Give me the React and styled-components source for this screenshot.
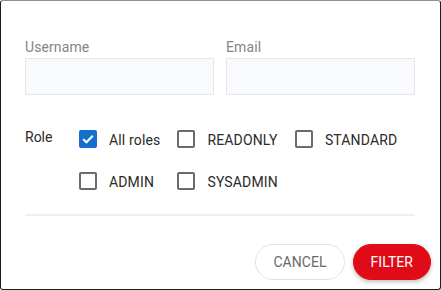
import React, { useState } from 'react'
import styled, { createGlobalStyle } from 'styled-components'

const GlobalStyle = createGlobalStyle`
  html, body {
    margin: 0;
    padding: 0;
    background: #fff;
  }
  body {
    font-family: Roboto, 'Liberation Sans', sans-serif;
    -webkit-font-smoothing: antialiased;
  }
  * {
    box-sizing: border-box;
  }
`

const Dialog = styled.div`
  width: 441px;
  height: 290px;
  border: 1px solid #1c1c1c;
  border-top-color: #8e8e8e;
  border-radius: 3px;
  background: #fff;
  display: flex;
  flex-direction: column;
`

const Body = styled.div`
  padding: 38px 25px 0 24px;
`

const Fields = styled.div`
  display: grid;
  grid-template-columns: minmax(0, 1fr) minmax(0, 1fr);
  column-gap: 12px;
`

const Field = styled.label`
  display: flex;
  flex-direction: column;
  min-width: 0;
`

const FieldLabel = styled.span`
  font-size: 14px;
  line-height: 16px;
  color: #858585;
  letter-spacing: 0.1px;
  margin-bottom: 3px;
`

const Input = styled.input`
  width: 100%;
  min-width: 0;
  height: 37px;
  background: #f9fafb;
  border: 1px solid #e4e6e9;
  border-radius: 1px;
  outline: none;
  font: inherit;
  font-size: 14px;
  padding: 0 10px;
`

const RoleRow = styled.div`
  display: flex;
  align-items: flex-start;
  margin-top: 35px;
`

const RoleLabel = styled.span`
  width: 54px;
  font-size: 14px;
  line-height: 14px;
  color: #2b2b2b;
`

const Options = styled.div`
  display: grid;
  grid-template-columns: repeat(3, auto);
  justify-content: start;
  column-gap: 17px;
  row-gap: 24px;
`

const Option = styled.label`
  display: flex;
  align-items: center;
  gap: 12px;
  height: 18px;
  cursor: pointer;
`

const Box = styled.span`
  width: 18px;
  height: 18px;
  border-radius: 2px;
  display: flex;
  align-items: center;
  justify-content: center;
  border: 2px solid ${({ $checked }) => ($checked ? '#1570cd' : '#6b6b6b')};
  background: ${({ $checked }) => ($checked ? '#1570cd' : '#fff')};
`

const OptionText = styled.span`
  font-size: 14px;
  line-height: 18px;
  letter-spacing: 0.15px;
  color: #2b2b2b;
  padding-top: 1px;
`

const Divider = styled.hr`
  border: 0;
  height: 2px;
  background: #efefef;
  margin: 24px 0 0;
`

const Footer = styled.div`
  display: flex;
  justify-content: flex-end;
  gap: 8px;
  padding: 28px 9px 0 0;
`

const Button = styled.button`
  height: 36px;
  padding: 0 17px;
  border-radius: 18px;
  font-family: Roboto, 'Liberation Sans', sans-serif;
  font-size: 14px;
  letter-spacing: 0.05px;
  text-transform: uppercase;
  cursor: pointer;
  border: 1px solid ${({ $primary }) => ($primary ? '#df0b18' : '#e3e3e3')};
  background: ${({ $primary }) => ($primary ? '#df0b18' : '#fff')};
  color: ${({ $primary }) => ($primary ? '#fff' : '#6a6a6a')};
  box-shadow: ${({ $primary }) =>
    $primary ? '0 2px 4px rgba(0, 0, 0, 0.25)' : 'none'};
`

const Check = () => (
  <svg width="14" height="14" viewBox="0 0 14 14">
    <polyline
      points="2.2,7.2 5.4,10.3 11.8,3.8"
      fill="none"
      stroke="#fff"
      strokeWidth="2"
    />
  </svg>
)

const roles = ['All roles', 'READONLY', 'STANDARD', 'ADMIN', 'SYSADMIN']

const App = () => {
  const [selected, setSelected] = useState(['All roles'])

  const toggle = (role) =>
    setSelected((s) =>
      s.includes(role) ? s.filter((r) => r !== role) : [...s, role]
    )

  return (
    <>
      <GlobalStyle />
      <Dialog>
        <Body>
          <Fields>
            <Field>
              <FieldLabel>Username</FieldLabel>
              <Input />
            </Field>
            <Field>
              <FieldLabel>Email</FieldLabel>
              <Input />
            </Field>
          </Fields>
          <RoleRow>
            <RoleLabel>Role</RoleLabel>
            <Options>
              {roles.map((role) => {
                const checked = selected.includes(role)
                return (
                  <Option key={role} onClick={() => toggle(role)}>
                    <Box $checked={checked}>{checked && <Check />}</Box>
                    <OptionText>{role}</OptionText>
                  </Option>
                )
              })}
            </Options>
          </RoleRow>
          <Divider />
        </Body>
        <Footer>
          <Button>Cancel</Button>
          <Button $primary>Filter</Button>
        </Footer>
      </Dialog>
    </>
  )
}

export default App
